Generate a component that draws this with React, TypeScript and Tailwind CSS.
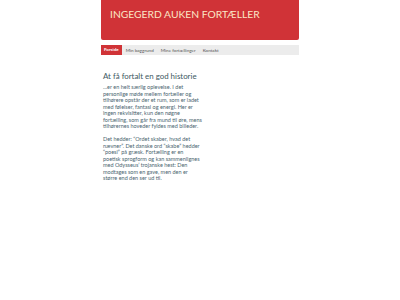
const para1 = [
  '…er en helt særlig oplevelse. I det',
  'personlige møde mellem fortæller og',
  'tilhørere opstår der et rum, som er ladet',
  'med følelser, fantasi og energi. Her er',
  'ingen rekvisitter, kun den nøgne',
  'fortælling, som går fra mund til øre, mens',
  'tilhørernes hoveder fyldes med billeder.',
]

const para2 = [
  'Det hedder: “Ordet skaber, hvad det',
  'nævner”. Det danske ord “skabe” hedder',
  '“poesi” på græsk. Fortælling er en',
  'poetisk sprogform og kan sammenlignes',
  'med Odysseus’ trojanske hest: Den',
  'modtages som en gave, men den er',
  'større end den ser ud til.',
]

export default function App() {
  const nav = ['Forside', 'Min baggrund', 'Mine fortællinger', 'Kontakt']

  return (
    <div className="min-h-[300px] bg-white font-['Lato',sans-serif]">
      <div className="mx-auto w-[198px]">
        <header className="h-[40px] rounded-b-[2px] bg-[#d03337] pl-[9px] pt-[8px]">
          <h1 className="text-[10.3px] leading-[13px] text-[#fbe6c6]">
            INGEGERD AUKEN FORTÆLLER
          </h1>
        </header>

        <nav className="mt-[5px] flex h-[10px] items-stretch gap-[1px] bg-[#ececec]">
          {nav.map((item, i) => (
            <span
              key={item}
              className={
                i === 0
                  ? 'flex items-center bg-[#d03337] px-[3px] text-[4.5px] font-bold text-white'
                  : 'flex items-center px-[3px] text-[4.6px] text-[#555]'
              }
            >
              {item}
            </span>
          ))}
        </nav>

        <main className="mt-[16px] pl-[2px] text-[#4a6570]">
          <h2 className="text-[7.9px] leading-[11px] text-[#3d5862]">At få fortalt en god historie</h2>
          <p className="mt-[2px] whitespace-nowrap text-[5.5px] leading-[6.5px]">
            {para1.map((line) => (
              <span key={line} className="block">{line}</span>
            ))}
          </p>
          <p className="mt-[6.5px] whitespace-nowrap text-[5.5px] leading-[6.5px]">
            {para2.map((line) => (
              <span key={line} className="block">{line}</span>
            ))}
          </p>
        </main>
      </div>
    </div>
  )
}
